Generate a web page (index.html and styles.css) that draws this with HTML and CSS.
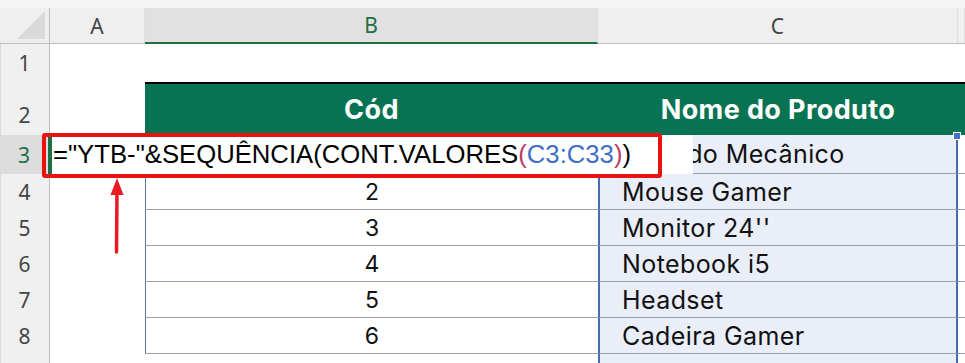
FILE: index.html
```html
<!DOCTYPE html>
<html lang="pt-BR">
<head>
    <meta charset="UTF-8">
    <meta name="viewport" content="width=device-width, initial-scale=1.0">
    <title>Planilha - Produtos</title>
    <link rel="stylesheet" href="styles.css">
</head>
<body>
    <div class="sheet">
        <div class="top-strip"></div>

        <div class="row head-row">
            <div class="corner"><span class="corner-tri"></span></div>
            <div class="col-head">A</div>
            <div class="col-head active">B</div>
            <div class="col-head">C</div>
            <div class="col-head"></div>
        </div>

        <div class="row r1">
            <div class="row-head">1</div>
            <div></div><div></div><div></div><div></div>
        </div>

        <div class="row r2">
            <div class="row-head bottom">2</div>
            <div></div>
            <div class="th">Cód</div>
            <div class="th">Nome do Produto</div>
            <div class="th"></div>
        </div>

        <!-- B3 is being edited, the editor below sits over it -->
        <div class="row r3">
            <div class="row-head active">3</div>
            <div></div>
            <div class="td num"></div>
            <div class="td name sel">Teclado Mecânico</div>
            <div class="td"></div>
        </div>
        <div class="row">
            <div class="row-head">4</div>
            <div></div>
            <div class="td num">2</div>
            <div class="td name sel">Mouse Gamer</div>
            <div class="td"></div>
        </div>
        <div class="row">
            <div class="row-head">5</div>
            <div></div>
            <div class="td num">3</div>
            <div class="td name sel">Monitor 24''</div>
            <div class="td"></div>
        </div>
        <div class="row">
            <div class="row-head">6</div>
            <div></div>
            <div class="td num">4</div>
            <div class="td name sel">Notebook i5</div>
            <div class="td"></div>
        </div>
        <div class="row">
            <div class="row-head">7</div>
            <div></div>
            <div class="td num">5</div>
            <div class="td name sel">Headset</div>
            <div class="td"></div>
        </div>
        <div class="row">
            <div class="row-head">8</div>
            <div></div>
            <div class="td num">6</div>
            <div class="td name sel">Cadeira Gamer</div>
            <div class="td"></div>
        </div>
        <div class="row r9">
            <div class="row-head"></div>
            <div></div>
            <div class="td"></div>
            <div class="td sel"></div>
            <div class="td"></div>
        </div>

        <!-- in-cell editor for B3 -->
        <div class="editor">
            <span>="YTB-"&amp;SEQUÊNCIA(CONT.VALORES<span class="paren">(</span><span class="ref">C3:C33</span><span class="paren">)</span>)</span>
        </div>
        <div class="highlight"></div>
        <div class="handle"></div>

        <svg class="arrow" width="20" height="82" viewBox="0 0 20 82">
            <line x1="9" y1="14" x2="8.5" y2="75" stroke="#ea1a22" stroke-width="3.5" stroke-linecap="round"/>
            <polygon points="9,1 2.5,18 15.5,18" fill="#ea1a22"/>
        </svg>
    </div>
</body>
</html>
```

FILE: styles.css
```css
body {
    margin: 0;
    background: #fff;
    font-family: "Liberation Sans", Arial, sans-serif;
    overflow: hidden;
}
.sheet {
    position: relative;
    width: 965px;
    height: 363px;
    overflow: hidden;
}
.top-strip {
    height: 8px;
    background: #f5f5f5;
}
.row {
    display: grid;
    grid-template-columns: 50px 95px 453px 360px 7px;
    height: 36px;
}

/* column + row headers */
.head-row {
    background: #efefef;
    border-bottom: 1px solid #bdbdbd;
    height: 35px;
}
.corner {
    position: relative;
    border-right: 1px solid #bdbdbd;
}
.corner-tri {
    position: absolute;
    right: 4px;
    bottom: 4px;
    width: 0;
    height: 0;
    border-left: 28px solid transparent;
    border-bottom: 28px solid #d9d9d9;
}
.col-head {
    display: flex;
    align-items: center;
    justify-content: center;
    font-family: "Noto Sans", sans-serif;
    font-size: 21px;
    color: #444;
    border-right: 1px solid #dedede;
}
.col-head.active {
    background: #e1e1e1;
    color: #1e6f43;
    border-bottom: 2px solid #1e6f43;
    margin-bottom: -1px;
}
.row-head {
    display: flex;
    align-items: center;
    justify-content: center;
    background: #f0f0f0;
    border-right: 1px solid #bdbdbd;
    font-family: "Noto Sans", sans-serif;
    font-size: 21px;
    color: #444;
    box-shadow: inset 8px -1px 0 -7px #dadada;
}
.row-head.bottom {
    align-items: flex-end;
    padding-bottom: 6px;
    box-sizing: border-box;
}
.row-head.active {
    background: #dcdcdc;
    color: #1e6f43;
    border-right: 2px solid #1e6f43;
}

.r1 { height: 38px; }
.r2 { height: 53px; }
.r3 { height: 39px; }
.r9 { height: 20px; }

/* table header */
.th {
    display: flex;
    align-items: center;
    justify-content: center;
    background: #087352;
    border-top: 2px solid #000;
    color: #fff;
    font-family: Inter, sans-serif;
    font-weight: 700;
    font-size: 27px;
    letter-spacing: 0.4px;
}

/* table body */
.td {
    display: flex;
    align-items: center;
    border-bottom: 1px solid #9aa1ad;
    font-family: Inter, sans-serif;
    font-size: 25px;
    letter-spacing: 0.4px;
    color: #111;
    box-sizing: border-box;
}
.td.num {
    justify-content: center;
    border-left: 1px solid #5a76aa;
    font-size: 23px;
    letter-spacing: 0;
}
.td.name {
    padding-left: 22px;
}
.td.sel {
    background: #e9eef8;
    border-left: 2px solid #4a6cae;
    border-right: 2px solid #4a6cae;
}
.r9 .td {
    border-bottom: none;
}

/* overlays: editor, annotation, range handle */
.editor {
    position: absolute;
    left: 50px;
    top: 135px;
    width: 643px;
    height: 39px;
    background: #fff;
    border-left: 2px solid #1e6f43;
    box-sizing: border-box;
    display: flex;
    align-items: center;
    padding-left: 1px;
    font-size: 25.7px;
    color: #000;
    white-space: nowrap;
}
.paren { color: #c0396b; }
.ref { color: #3f6fc6; }
.highlight {
    position: absolute;
    left: 42px;
    top: 133px;
    width: 620px;
    height: 45px;
    border: 4px solid #e81212;
    border-radius: 3px;
    box-sizing: border-box;
}
.handle {
    position: absolute;
    left: 953px;
    top: 132px;
    width: 6px;
    height: 6px;
    background: #4472c4;
    border: 1px solid #fff;
}
.arrow {
    position: absolute;
    left: 108px;
    top: 177px;
}
```
